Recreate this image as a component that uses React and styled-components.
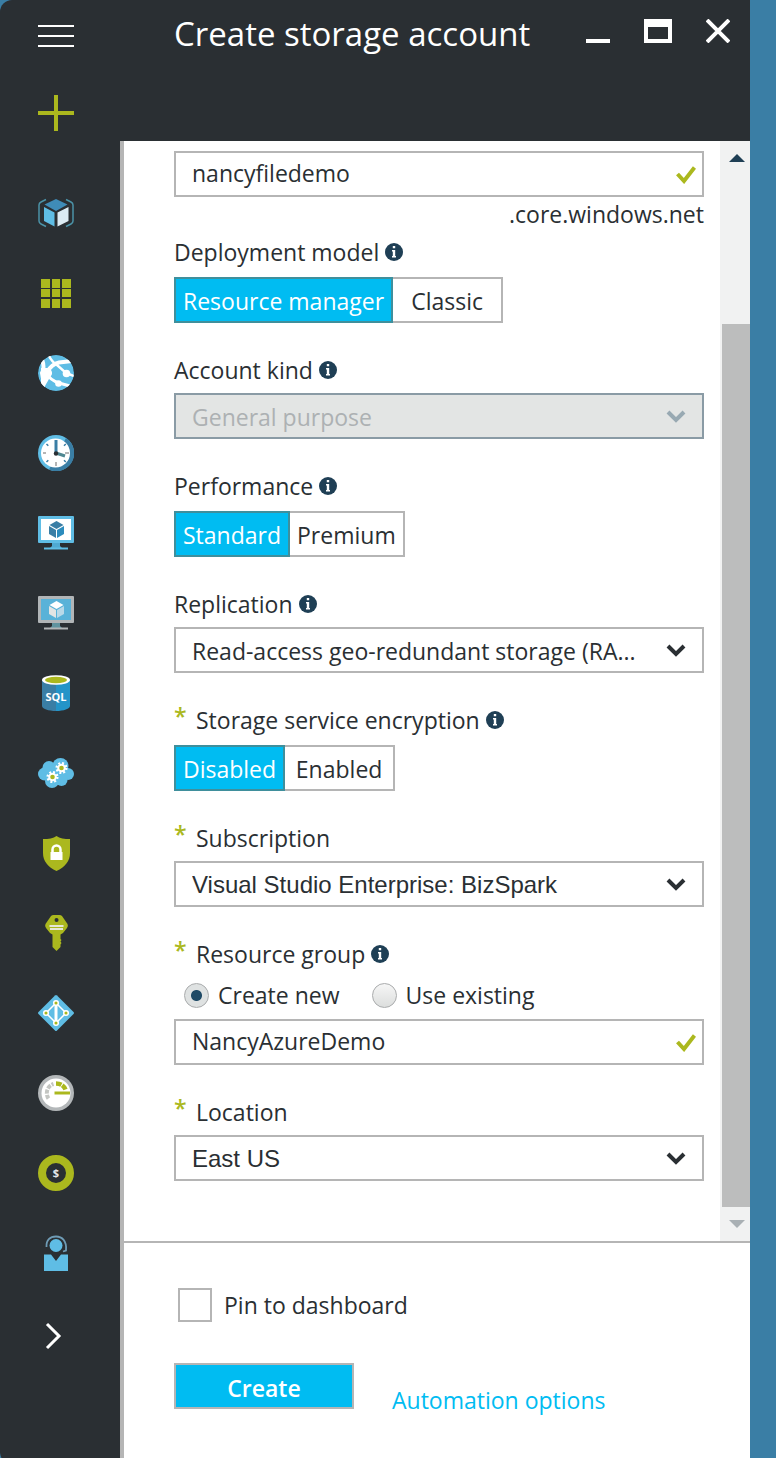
import React, { useState } from "react";
import styled, { createGlobalStyle } from "styled-components";

const c = {
  ink: "#2a2f33",
  frame: "#3a7ea5",
  cyan: "#00bcf2",
  sky: "#5fbde5",
  deep: "#3a7ea5",
  green: "#abb81e",
  line: "#b5b5b5",
  pale: "#e3e5e4",
};

const GlobalStyle = createGlobalStyle`
  *, *::before, *::after { box-sizing: border-box; }
  body {
    margin: 0;
    background: ${c.frame};
    color: ${c.ink};
    font: 400 23px/32px "Open Sans", "Noto Sans", sans-serif;
  }
  button, input, select { font: inherit; color: inherit; margin: 0; border-radius: 0; }
  svg { display: block; flex: none; }
`;

const Frame = styled.div`
  min-height: 100vh;
  padding-right: 26px;
  display: flex;
`;

const Window = styled.div`
  flex: 1;
  min-width: 0;
  display: flex;
  background: ${c.ink};
  border-radius: 12px 0 0 12px;
  overflow: hidden;
`;

const Rail = styled.nav`
  flex: none;
  width: 120px;
  display: flex;
  flex-direction: column;
`;

const RailButton = styled.button`
  width: 112px;
  height: ${(p) => p.$height || 80}px;
  padding: 0;
  border: 0;
  background: none;
  display: flex;
  align-items: center;
  justify-content: center;
`;

const RailList = styled.ul`
  list-style: none;
  margin: 19px 0 0;
  padding: 0;
`;

const Blade = styled.main`
  flex: 1;
  min-width: 0;
  display: flex;
  flex-direction: column;
`;

const BladeHeader = styled.header`
  height: 141px;
  padding: 10px 2px 0 54px;
  display: flex;
  align-items: flex-start;
`;

const Title = styled.h1`
  flex: 1;
  margin: 0;
  color: #fff;
  font-size: 33px;
  line-height: 48px;
  font-weight: 400;
  white-space: nowrap;
`;

const WindowButton = styled.button`
  width: 60px;
  height: 42px;
  padding: 0;
  border: 0;
  background: none;
  display: flex;
  align-items: center;
  justify-content: center;
`;

const BladeContent = styled.form`
  flex: 1;
  display: flex;
  flex-direction: column;
  background: #fff;
  border-left: 4px solid ${c.line};
`;

const ScrollArea = styled.div`
  display: flex;
`;

const Fields = styled.div`
  flex: 1;
  min-width: 0;
  padding: 10px 16px 60px 50px;
`;

const Field = styled.div`
  margin-top: ${(p) => (p.$first ? 0 : p.$tight ? 6 : 31)}px;
`;

const LabelRow = styled.div`
  display: flex;
  align-items: center;
  gap: 6px;
  margin-bottom: ${(p) => (p.$loose ? 9 : 7)}px;
`;

const LabelText = styled.label`
  display: flex;
  white-space: nowrap;
`;

const Star = styled.span`
  width: 22px;
  line-height: 24px;
  color: ${c.green};
  font-weight: 600;
`;

const Suffix = styled.div`
  margin-top: 1px;
  text-align: right;
`;

const ControlBox = styled.div`
  position: relative;
`;

const TextInput = styled.input`
  display: block;
  width: 100%;
  height: 46px;
  padding: 0 48px 2px 16px;
  border: 2px solid ${c.line};
  background: #fff;
  outline: none;
`;

const SelectInput = styled.select`
  display: block;
  appearance: none;
  width: 100%;
  height: 46px;
  padding: 2px 48px 0 16px;
  border: 2px solid ${c.line};
  background: #fff;
  outline: none;
  ${(p) => p.$system && `font-family: "Liberation Sans", Arial, sans-serif; font-size: 24px;`}
  &:disabled {
    background: ${c.pale};
    border-color: #8a9ba5;
    color: #adb1b3;
    opacity: 1;
  }
`;

const Adornment = styled.span`
  position: absolute;
  top: 2px;
  bottom: 0;
  right: ${(p) => p.$right}px;
  display: flex;
  align-items: center;
  pointer-events: none;
`;

const Segments = styled.div`
  display: flex;
`;

const Segment = styled.button`
  height: 46px;
  min-width: 110px;
  padding: 2px 7px 0;
  white-space: nowrap;
  border: 2px solid ${c.line};
  background: #fff;
  & + & { border-left-width: 0; }
  &[aria-pressed="true"] {
    background: ${c.cyan};
    border: 2px solid #3f8f9c;
    color: #fff;
  }
`;

const Radios = styled.div`
  display: flex;
  gap: 32px;
  padding-left: 10px;
  margin-bottom: 8px;
`;

const Choice = styled.label`
  display: flex;
  align-items: center;
  gap: ${(p) => p.$gap}px;
  white-space: nowrap;
`;

const Radio = styled.input`
  appearance: none;
  width: 25px;
  height: 25px;
  border: 1px solid #a9abac;
  && { border-radius: 50%; }
  background: linear-gradient(#f6f6f6, #dcdedd);
  &:checked {
    background: radial-gradient(circle, #1f4a66 5px, #dfe2e2 6px);
  }
`;

const Checkbox = styled.input`
  appearance: none;
  width: 34px;
  height: 34px;
  border: 2px solid ${c.line};
  background: #fff;
  &:checked { background: ${c.cyan}; }
`;

const ScrollTrack = styled.div`
  flex: none;
  width: 30px;
  display: flex;
  flex-direction: column;
  background: #f1f2f2;
`;

const ScrollButton = styled.button`
  height: 34px;
  padding: 0 0 0 4px;
  border: 0;
  background: none;
  display: flex;
  align-items: center;
  justify-content: center;
`;

const ScrollGap = styled.div`
  flex: 149;
`;

const ScrollThumb = styled.div`
  flex: 883;
  margin-left: 2px;
  background: #bcbdbd;
`;

const Footer = styled.footer`
  flex: 1;
  border-top: 2px solid ${c.line};
  padding: 45px 16px 48px 50px;
`;

const PinRow = styled.div`
  padding-left: 4px;
`;

const Actions = styled.div`
  display: flex;
  align-items: flex-start;
  gap: 38px;
  margin-top: 41px;
`;

const CreateButton = styled.button`
  width: 180px;
  height: 46px;
  padding: 4px 0 0;
  border: 2px solid ${c.line};
  background: ${c.cyan};
  color: #fff;
  font-weight: 600;
`;

const OptionsLink = styled.a`
  margin-top: 21px;
  color: ${c.cyan};
  text-decoration: none;
  white-space: nowrap;
`;

const Icon = ({ children, w = 36, h = 36 }) => (
  <svg width={w} height={h} viewBox={`0 0 ${w} ${h}`} fill="none" aria-hidden="true">
    {children}
  </svg>
);

const ResourceGroupIcon = () => (
  <Icon>
    <path d="M8 4.500 3 7Q1 8 1 10v16q0 2 2 3l5 2.500M28 4.500l5 2.500q2 1 2 3v16q0 2-2 3l-5 2.500" stroke="#4b93a8" strokeWidth="1.500" />
    <path d="M18 4 29.500 9.500 18 16 6.500 9.500Z" fill="#3f8cb8" />
    <path d="M6 12 16.500 17.500v14L6 26Z" fill={c.sky} />
    <path d="M30.500 12 19.500 17.500v14l11-5.500Z" fill="#dcebf3" />
  </Icon>
);

const GridIcon = () => (
  <Icon>
    {[3, 14, 24].map((x) =>
      [4, 14, 24].map((y) => <rect key={`${x}-${y}`} x={x} y={y} width={x === 14 ? 8 : 9} height={y === 14 ? 8 : 9} fill={c.green} />)
    )}
  </Icon>
);

const WebIcon = () => (
  <Icon>
    <clipPath id="globe"><circle cx="18" cy="18" r="18" /></clipPath>
    <g clipPath="url(#globe)">
      <circle cx="18" cy="18" r="18" fill={c.sky} />
      <path d="M4 4Q7 13 4 18q2 7 1 14" stroke="#fff" strokeWidth="4" />
      <path d="M11 1q3 6 8 9l9 8 8 3" stroke="#fff" strokeWidth="2.500" />
      <path d="M9 17q5-8 12-9.500L34 6" stroke="#fff" strokeWidth="4" />
      <path d="M8 18q4 7 13 10l11 3" stroke="#fff" strokeWidth="3" />
      <path d="M3 13h7l4 5-3 6-4 7-4-3Z" fill="#fff" />
      <circle cx="9" cy="18" r="5" fill="#fff" />
      <circle cx="28.500" cy="18.500" r="3.800" fill="#fff" />
      <circle cx="20.500" cy="28.500" r="3.300" fill="#fff" />
    </g>
  </Icon>
);

const ClockIcon = () => (
  <Icon>
    <circle cx="18" cy="18" r="18" fill={c.sky} />
    <path d="M28 3A18 18 0 0 1 11 34.600Z" fill={c.deep} />
    <circle cx="17.500" cy="18" r="14.500" fill="#fff" />
    <path d="M5 18h3M27 18h4M18 27v4" stroke="#b5b5b5" strokeWidth="2" />
    <path d="m8.500 9 1.800 1.800M26 10.800 27.800 9M8.500 27l1.800-1.800M26 25.200l1.800 1.800" stroke={c.deep} strokeWidth="1.500" />
    <path d="M18 5v13" stroke={c.deep} strokeWidth="3" />
    <path d="m18 18 9 3" stroke="#4f8791" strokeWidth="3" />
    <circle cx="18" cy="18.500" r="2.200" fill={c.ink} />
  </Icon>
);

const MonitorIcon = ({ frame, screen, stand, top, left, right }) => (
  <Icon>
    <path d="M14 27h8v4l2 2H12l2-2Z" fill={stand} />
    <path d="M6 32.500h24v2H6z" fill={frame} />
    <rect x="0" y="1" width="36" height="27" rx="1" fill={frame} />
    <rect x="3" y="4" width="30" height="21" fill={screen} />
    <path d="m18.500 6 7 4-7 4-7-4Z" fill={top} />
    <path d="m11 11 7 4v8l-7-4Z" fill={left} />
    <path d="m26 11-7 4v8l7-4Z" fill={right} />
  </Icon>
);

const SqlIcon = () => (
  <Icon>
    <path d="M4 5v26c0 2.800 6.300 5 14 5V5Z" fill={c.deep} />
    <path d="M32 5v26c0 2.800-6.300 5-14 5V5Z" fill="#2494c8" />
    <ellipse cx="18" cy="5" rx="14" ry="4.800" fill="#fff" />
    <ellipse cx="18" cy="5" rx="11" ry="3.300" fill={c.green} />
    <text x="18" y="26" textAnchor="middle" fill="#fff" fontFamily="Open Sans, sans-serif" fontSize="11" fontWeight="700">SQL</text>
  </Icon>
);

const Gear = ({ x, y }) => (
  <g transform={`translate(${x} ${y})`}>
    <circle r="4.800" stroke="#fff" strokeWidth="2.500" strokeDasharray="1.900 1.870" />
    <circle r="3.300" fill={c.green} stroke="#fff" strokeWidth="2" />
  </g>
);

const CloudIcon = () => (
  <Icon>
    <g fill={c.sky}>
      <circle cx="6.500" cy="19" r="6.500" />
      <circle cx="11" cy="12.500" r="6.500" />
      <circle cx="22.500" cy="11" r="8" />
      <circle cx="30" cy="19" r="6" />
      <circle cx="23.500" cy="25" r="6" />
      <circle cx="14" cy="26" r="7" />
      <rect x="8" y="11" width="20" height="15" />
    </g>
    <Gear x={23.5} y={13} />
    <Gear x={14.5} y={22} />
  </Icon>
);

const ShieldIcon = () => (
  <Icon>
    <path d="M18.500 1c3 2.500 8 3 13.500 3v14c0 8-5 14-13.500 18C10 32 5 26 5 18V4c5.500 0 10.500-.5 13.500-3Z" fill={c.green} />
    <path d="M14.500 17v-2.500a4 4 0 0 1 8 0V17" stroke="#fff" strokeWidth="2.500" />
    <rect x="12.500" y="17" width="12" height="8" fill="#fff" />
  </Icon>
);

const KeyIcon = () => (
  <Icon>
    <path fillRule="evenodd" d="M15.500 0h6q1.500 0 2.500 1l5.500 8q1 2-.5 4l-4 5-2.500 1.500V24l1 1-1 1.500 1 1.500-1 1.500V32l-4 4-4-4V19.500L12 18l-4-5q-1.500-2-.5-4L13 1q1-1 2.500-1Zm3 3a2 2 0 1 0 .1 4 2 2 0 0 0-.1-4Z" fill={c.green} />
    <path d="M11.500 11h14M12 14h13" stroke="#e6e7d6" strokeWidth="1.800" />
  </Icon>
);

const DirectoryIcon = () => (
  <Icon>
    <path d="M17 .5q1-1 2 0l16.500 16.500q1 1 0 2L19 35.500q-1 1-2 0L.5 19q-1-1 0-2Z" fill={c.sky} />
    <path d="M18 8 8 18l10 10 10-10Z" stroke="#fff" strokeWidth="1.500" />
    <path d="M18 8v20" stroke="#fff" strokeWidth="3" />
    {[[18, 8], [8, 18], [28, 18], [18, 28]].map(([x, y]) => (
      <circle key={`${x}-${y}`} cx={x} cy={y} r="2.300" fill={c.green} stroke="#fff" strokeWidth="1.500" />
    ))}
  </Icon>
);

const GaugeIcon = () => (
  <Icon>
    <circle cx="18" cy="18" r="18" fill="#b3b7b9" />
    <circle cx="18" cy="18" r="14.500" fill="#fff" />
    <path d="M10.500 23.500A9.500 9.500 0 0 1 15.500 9" stroke="#c3c5c2" strokeWidth="4" strokeDasharray="4 1.200" />
    <path d="M18 8.500q7 0 9.500 6" stroke={c.green} strokeWidth="4.500" strokeDasharray="5.500 1" />
    <path d="M16.500 16.500H32v3H16.500Z" fill={c.green} />
  </Icon>
);

const BillingIcon = () => (
  <Icon>
    <circle cx="18" cy="18" r="14" stroke={c.green} strokeWidth="8" />
    <text x="18" y="22" textAnchor="middle" fill="#e4e6e8" fontFamily="Open Sans, sans-serif" fontSize="11" fontWeight="700">$</text>
  </Icon>
);

const SupportIcon = () => (
  <Icon>
    <path d="M8.500 12C8 5 12 1.500 18 1.500S29 6 28 15.500l-3 1" stroke="#6f9cb6" strokeWidth="1.800" />
    <circle cx="18" cy="10.500" r="6.500" fill={c.sky} />
    <path d="M6 19.500h7l5 6.500 5-6.500h7V36H6Z" fill={c.sky} />
  </Icon>
);

const railItems = [
  ["Resource groups", <ResourceGroupIcon />],
  ["All resources", <GridIcon />],
  ["App Services", <WebIcon />],
  ["Recent", <ClockIcon />],
  ["Virtual machines", <MonitorIcon frame={c.sky} stand="#4fa9d2" screen="#fff" top={c.deep} left={c.deep} right="#2c8cbd" />],
  ["Virtual machines (classic)", <MonitorIcon frame="#b1b5b7" stand="#5f939f" screen="#59b2d8" top="#fff" left="#e3e5e4" right="#b9d9e8" />],
  ["SQL databases", <SqlIcon />],
  ["Cloud services", <CloudIcon />],
  ["Security Center", <ShieldIcon />],
  ["Key vaults", <KeyIcon />],
  ["Azure Active Directory", <DirectoryIcon />],
  ["Monitor", <GaugeIcon />],
  ["Billing", <BillingIcon />],
  ["Help and support", <SupportIcon />],
];

const InfoIcon = () => (
  <svg width="18" height="18" viewBox="0 0 18 18" aria-hidden="true">
    <circle cx="9" cy="9" r="9" fill="#1f3f55" />
    <path d="M7.800 3h2.400v2.200H7.800ZM7 7h3.200v6H11v1.500H7V13h.8V8.500H7Z" fill="#fff" />
  </svg>
);

const Check = () => (
  <Adornment $right={8}>
    <Icon w={20} h={18}>
      <path d="m1.500 8 6.500 7L18.500 1.500" stroke={c.green} strokeWidth="4" />
    </Icon>
  </Adornment>
);

function Label({ id, required, info, loose, children }) {
  return (
    <LabelRow $loose={loose}>
      <LabelText id={`${id}-label`} htmlFor={id}>
        {required && <Star>*</Star>}
        {children}
      </LabelText>
      {info && <InfoIcon />}
    </LabelRow>
  );
}

function Select({ id, value, system, disabled }) {
  return (
    <ControlBox>
      <SelectInput id={id} $system={system} disabled={disabled} defaultValue={value}>
        <option>{value}</option>
      </SelectInput>
      <Adornment $right={18}>
        <Icon w={20} h={14}>
          <path d="m2 2 8 8 8-8" stroke={disabled ? "#98a9b2" : c.ink} strokeWidth="4" />
        </Icon>
      </Adornment>
    </ControlBox>
  );
}

function Toggle({ id, options }) {
  const [active, setActive] = useState(options[0]);
  return (
    <Segments id={id} role="group" aria-labelledby={`${id}-label`}>
      {options.map((o) => (
        <Segment key={o} type="button" aria-pressed={o === active} onClick={() => setActive(o)}>
          {o}
        </Segment>
      ))}
    </Segments>
  );
}

export default function App() {
  return (
    <Frame>
      <GlobalStyle />
      <Window>
        <Rail aria-label="Services">
          <RailButton $height={72} aria-label="Menu">
            <Icon><path d="M0 8h36M0 18h36M0 28h36" stroke="#fff" strokeWidth="2" /></Icon>
          </RailButton>
          <RailButton $height={82} aria-label="New">
            <Icon><path d="M0 18h36M18 0v36" stroke={c.green} strokeWidth="4" /></Icon>
          </RailButton>
          <RailList>
            {railItems.map(([name, icon]) => (
              <li key={name}>
                <RailButton aria-label={name}>{icon}</RailButton>
              </li>
            ))}
          </RailList>
          <RailButton $height={86} aria-label="More services">
            <Icon><path d="m9 6 12 12L9 30" stroke="#fff" strokeWidth="3" /></Icon>
          </RailButton>
        </Rail>

        <Blade>
          <BladeHeader>
            <Title>Create storage account</Title>
            <WindowButton aria-label="Minimize">
              <Icon w={24} h={24}><path d="M0 20h24v4H0Z" fill="#fff" /></Icon>
            </WindowButton>
            <WindowButton aria-label="Maximize">
              <Icon w={28} h={24}><path fillRule="evenodd" d="M0 0h28v24H0ZM4 8v12h20V8Z" fill="#fff" /></Icon>
            </WindowButton>
            <WindowButton aria-label="Close">
              <Icon w={24} h={24}><path d="m1 1 22 22M23 1 1 23" stroke="#fff" strokeWidth="4" /></Icon>
            </WindowButton>
          </BladeHeader>

          <BladeContent onSubmit={(e) => e.preventDefault()}>
            <ScrollArea>
              <Fields>
                <Field $first>
                  <ControlBox>
                    <TextInput id="name" aria-label="Name" defaultValue="nancyfiledemo" />
                    <Check />
                  </ControlBox>
                  <Suffix>.core.windows.net</Suffix>
                </Field>
                <Field $tight>
                  <Label id="model" info loose>Deployment model</Label>
                  <Toggle id="model" options={["Resource manager", "Classic"]} />
                </Field>
                <Field>
                  <Label id="kind" info>Account kind</Label>
                  <Select id="kind" value="General purpose" disabled />
                </Field>
                <Field>
                  <Label id="performance" info loose>Performance</Label>
                  <Toggle id="performance" options={["Standard", "Premium"]} />
                </Field>
                <Field>
                  <Label id="replication" info>Replication</Label>
                  <Select id="replication" value="Read-access geo-redundant storage (RA..." />
                </Field>
                <Field>
                  <Label id="encryption" required info loose>Storage service encryption</Label>
                  <Toggle id="encryption" options={["Disabled", "Enabled"]} />
                </Field>
                <Field>
                  <Label id="subscription" required>Subscription</Label>
                  <Select id="subscription" value="Visual Studio Enterprise: BizSpark" system />
                </Field>
                <Field>
                  <Label id="group" required info loose>Resource group</Label>
                  <Radios>
                    <Choice $gap={9}>
                      <Radio type="radio" name="group-mode" defaultChecked />
                      Create new
                    </Choice>
                    <Choice $gap={9}>
                      <Radio type="radio" name="group-mode" />
                      Use existing
                    </Choice>
                  </Radios>
                  <ControlBox>
                    <TextInput id="group" defaultValue="NancyAzureDemo" />
                    <Check />
                  </ControlBox>
                </Field>
                <Field>
                  <Label id="location" required>Location</Label>
                  <Select id="location" value="East US" system />
                </Field>
              </Fields>
              <ScrollTrack>
                <ScrollButton type="button" aria-label="Scroll up">
                  <Icon w={16} h={8}><path d="M8 0l8 8H0Z" fill="#1f3f55" /></Icon>
                </ScrollButton>
                <ScrollGap />
                <ScrollThumb />
                <ScrollButton type="button" aria-label="Scroll down">
                  <Icon w={16} h={8}><path d="M0 0h16L8 8Z" fill="#a9b0b4" /></Icon>
                </ScrollButton>
              </ScrollTrack>
            </ScrollArea>

            <Footer>
              <PinRow>
                <Choice $gap={12}>
                  <Checkbox type="checkbox" />
                  Pin to dashboard
                </Choice>
              </PinRow>
              <Actions>
                <CreateButton type="submit">Create</CreateButton>
                <OptionsLink href="#automation">Automation options</OptionsLink>
              </Actions>
            </Footer>
          </BladeContent>
        </Blade>
      </Window>
    </Frame>
  );
}
